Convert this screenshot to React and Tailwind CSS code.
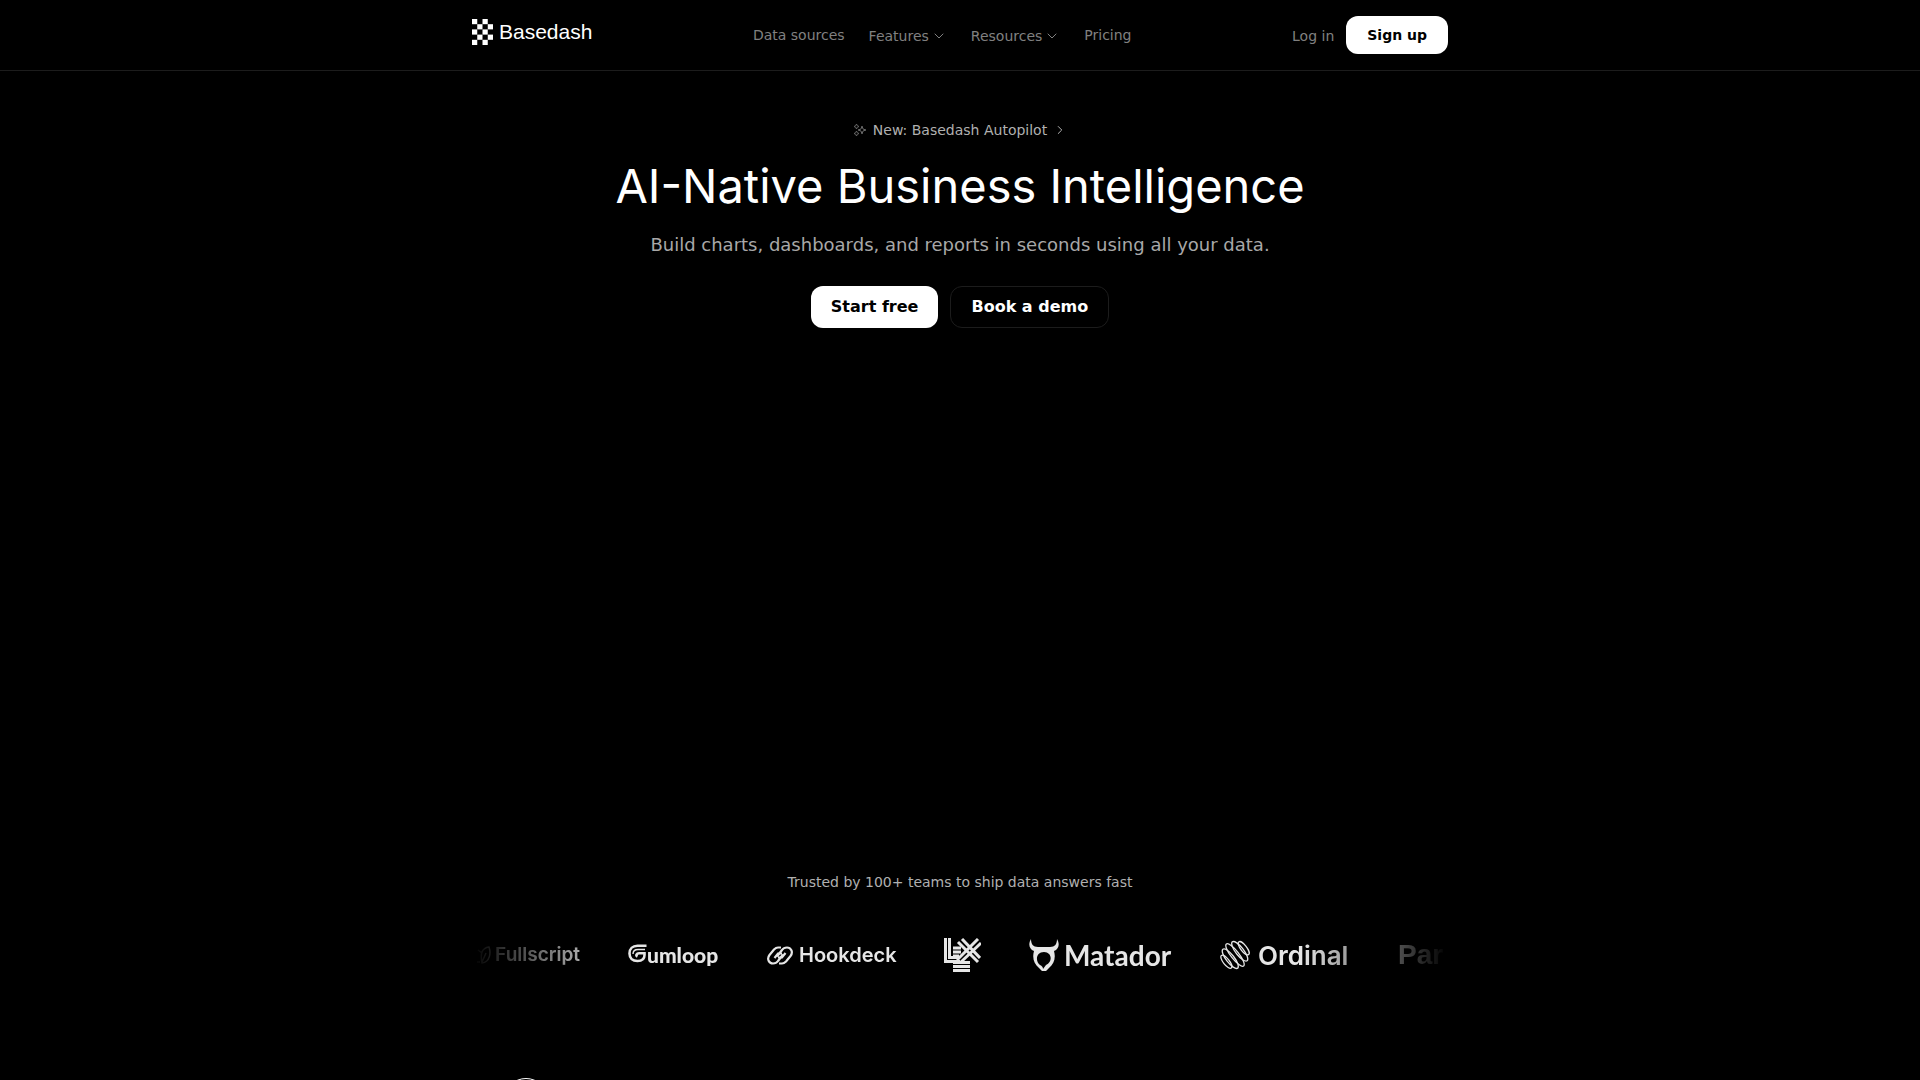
import React from "react";
import { ChevronDown, ChevronRight } from "lucide-react";

const checker = [
  [0, 0], [2, 0],
  [1, 1], [3, 1],
  [0, 2], [2, 2],
  [1, 3], [3, 3],
  [0, 4], [2, 4],
];

function Wordmark() {
  return (
    <a href="#" className="mb-[6px] flex items-center gap-[6px] font-['Liberation_Sans',sans-serif] text-[21px] leading-7 text-white">
      <svg width="21" height="26" viewBox="0 0 21 26" fill="currentColor" aria-hidden="true">
        {checker.map(([x, y]) => (
          <rect key={`${x}-${y}`} x={x * 5.25} y={y * 5.2} width="5.25" height="5.2" />
        ))}
      </svg>
      Basedash
    </a>
  );
}

function Header() {
  return (
    <header className="border-b border-[#1c1c1c]">
      <div className="mx-auto flex h-[70px] max-w-5xl items-center justify-between px-6 text-sm text-[#808080]">
        <Wordmark />
        <nav className="flex items-center gap-6">
          <a href="#">Data sources</a>
          <button type="button" className="mt-[2px] flex items-center gap-[2px]">
            Features
            <ChevronDown size={16} strokeWidth={1} absoluteStrokeWidth />
          </button>
          <button type="button" className="mt-[2px] flex items-center gap-[2px]">
            Resources
            <ChevronDown size={16} strokeWidth={1} absoluteStrokeWidth />
          </button>
          <a href="#">Pricing</a>
        </nav>
        <div className="flex items-center gap-3">
          <a href="#" className="mt-[2px]">Log in</a>
          <a href="#" className="rounded-xl bg-white px-[21px] py-[9px] font-bold text-black">Sign up</a>
        </div>
      </div>
    </header>
  );
}

function Hero() {
  return (
    <section className="flex flex-col items-center px-6 pt-[47px] text-center">
      <a href="#" className="flex items-center gap-[6px] text-sm leading-6 text-[#b0b0b0]">
        <svg width="14" height="14" viewBox="0 0 14 14" fill="none" stroke="#686868" strokeWidth="1" aria-hidden="true">
          <path d="M9 3 10 6 13 7 10 8 9 11 8 8 5 7 8 6Z" />
          <path d="M3.5 1 4.3 2.7 6 3.5 4.3 4.3 3.5 6 2.7 4.3 1 3.5 2.7 2.7Z" />
          <path d="M3.5 8 4.3 9.7 6 10.5 4.3 11.3 3.5 13 2.7 11.3 1 10.5 2.7 9.7Z" />
        </svg>
        New: Basedash Autopilot
        <ChevronRight size={14} strokeWidth={1} absoluteStrokeWidth />
      </a>
      <h1 className="mt-4 font-['Inter',sans-serif] text-[47px] leading-[56px] text-white">AI-Native Business Intelligence</h1>
      <p className="mt-[17px] text-lg leading-7 text-[#a8a8a8]">
        Build charts, dashboards, and reports in seconds using all your data.
      </p>
      <div className="mt-[27px] flex gap-3 text-base font-bold">
        <a href="#" className="rounded-xl bg-white px-5 py-[9px] text-black">Start free</a>
        <a href="#" className="rounded-xl border border-[#1c1c1c] px-5 py-2 text-white">Book a demo</a>
      </div>
    </section>
  );
}

function Fullscript() {
  return (
    <li className="flex w-[108px] items-center justify-end gap-1 font-['Inter',sans-serif] text-[19px] font-semibold">
      <svg width="14" height="20" viewBox="0 0 14 20" fill="none" stroke="currentColor" strokeWidth="1.5" aria-hidden="true">
        <path d="M5 18C13 17 14 8 12 2 5 3 3 8 5 18ZM5 17 9 8M1 5 5 8M0 17H3" />
      </svg>
      Fullscript
    </li>
  );
}

function Gumloop() {
  return (
    <li className="flex w-[91px] items-center font-['Lato',sans-serif] text-[21px] font-black">
      <svg width="19" height="19" viewBox="0 0 19 19" fill="none" stroke="currentColor" strokeWidth="2.6" className="mb-1 shrink-0" role="img" aria-label="G">
        <path d="M18.500 1.8H9.500C4.500 1.8 1.500 5 1.500 9.500S4.500 17 9.500 17C13.500 17 16.500 15 16.500 11V9.300H11C8.500 9.300 7.500 11.500 9.500 12.500" />
        <path d="M17 5.500H10C7 5.500 5 7 5 10" strokeWidth="1.4" />
      </svg>
      umloop
    </li>
  );
}

function Hookdeck() {
  return (
    <li className="flex w-[129px] items-center gap-[6px] font-['Inter',sans-serif] text-[20px] font-semibold">
      <svg width="26" height="19" viewBox="0 0 26 19" fill="none" stroke="currentColor" strokeWidth="2.2" aria-hidden="true" className="shrink-0">
        <path d="M14 1.5H11C9 1.5 8 2.5 7 3.5L2.5 9C-.5 13 2 17.5 6 17.5 8.5 17.5 10 16.5 11 15L16 8.5M15 7.5H11L7.5 12" />
        <path d="M12 17.5H15C17 17.5 18 16.5 19 15.5L23.5 10C26.5 6 24 1.5 20 1.5 17.5 1.5 16 2.5 15 4L10 10.5M11 11.5H15L18.5 7" />
      </svg>
      Hookdeck
    </li>
  );
}

function Lex() {
  return (
    <li className="w-[37px]">
      <svg width="37" height="34" viewBox="0 0 37 34" fill="none" stroke="currentColor" strokeWidth="3" role="img" aria-label="LEX">
        <path d="M1.5 0V23.5H16M5.5 0V19.5H14M9 10H17M9 14H17M9 18H15M9 24.5H26M9 28.5H26M9 32.5H26" />
        <path d="M14 4 34 24M18 1 36 20M34 1 13 22M37 5 17 24" strokeWidth="3" />
      </svg>
    </li>
  );
}

function Matador() {
  return (
    <li className="flex w-[143px] items-center gap-[5px] font-['Lato',sans-serif] text-[28px] font-bold">
      <svg width="30" height="33" viewBox="0 0 30 33" fill="currentColor" aria-hidden="true" className="shrink-0">
        <path
          fillRule="evenodd"
          d="M2 0C2 5 4 8 9 8H21C26 8 28 5 28 0 31 5 30 10 25 12 27 19 25 25 20 29L17 32H13L10 29C5 25 3 19 5 12 0 10-1 5 2 0ZM15 13C7 13 6 22 11 26 13 27 14 28 14 30L17 26C24 23 23 13 15 13Z"
        />
      </svg>
      Matador
    </li>
  );
}

function Ordinal() {
  return (
    <li className="flex w-[130px] items-center gap-2 font-['Inter',sans-serif] text-[26px] font-semibold">
      <svg width="30" height="30" viewBox="0 0 30 30" fill="none" stroke="currentColor" strokeWidth="1.3" aria-hidden="true" className="shrink-0">
        <g transform="rotate(-38 15 15)">
          <ellipse cx="4" cy="15" rx="3" ry="8" />
          <ellipse cx="9" cy="15" rx="4" ry="12" />
          <ellipse cx="15" cy="15" rx="4" ry="14" />
          <ellipse cx="21" cy="15" rx="4" ry="12" />
          <ellipse cx="26" cy="15" rx="3" ry="8" />
        </g>
      </svg>
      Ordinal
    </li>
  );
}

function Customers() {
  return (
    <section className="mx-auto mt-[544px] max-w-5xl px-6">
      <p className="text-center text-sm text-[#b0b0b0]">Trusted by 100+ teams to ship data answers fast</p>
      <div className="mt-9 overflow-hidden [mask-image:linear-gradient(to_right,transparent,black_15%,black_85%,transparent)]">
        <ul className="flex h-[54px] items-center gap-12 whitespace-nowrap text-[#e6e6e6] *:shrink-0">
          <Fullscript />
          <Gumloop />
          <Hookdeck />
          <Lex />
          <Matador />
          <Ordinal />
          <li className="font-['Liberation_Sans',sans-serif] text-[28px] font-bold">Par</li>
        </ul>
      </div>
    </section>
  );
}

export default function App() {
  return (
    <div className="h-screen overflow-hidden bg-black font-['DejaVu_Sans',sans-serif]">
      <Header />
      <main>
        <Hero />
        <Customers />
        <section className="mx-auto mt-24 max-w-5xl px-6">
          <svg width="44" height="44" viewBox="0 0 44 44" fill="none" stroke="white" className="ml-8" aria-hidden="true">
            <circle cx="22" cy="22" r="21.5" />
          </svg>
        </section>
      </main>
    </div>
  );
}
